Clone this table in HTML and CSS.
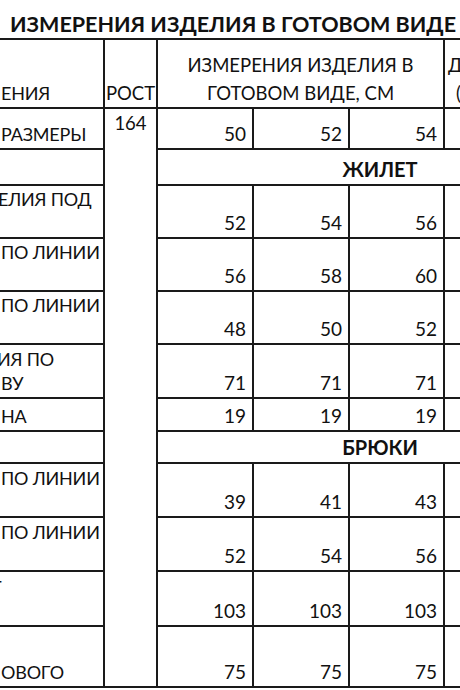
FILE: index.html
```html
<!DOCTYPE html>
<html lang="ru">
<head>
<meta charset="utf-8">
<link rel="stylesheet" href="styles.css">
</head>
<body>
<div class="sheet">
  <div class="title">ИЗМЕРЕНИЯ ИЗДЕЛИЯ В ГОТОВОМ ВИДЕ</div>
  <table class="grid">
    <colgroup>
      <col class="c-name"><col class="c-rost"><col class="c-num"><col class="c-num"><col class="c-num3"><col class="c-tol">
    </colgroup>
    <tr class="r-head">
      <td class="name">ЕНИЯ</td>
      <td class="rost-h">РОСТ</td>
      <td class="head-mid" colspan="3">ИЗМЕРЕНИЯ ИЗДЕЛИЯ В<br>ГОТОВОМ ВИДЕ, СМ</td>
      <td class="tol">ДОПУСК<br><span class="tol-2">(СМ)</span></td>
    </tr>
    <tr class="r-size">
      <td class="name">РАЗМЕРЫ</td>
      <td class="rost" rowspan="12">164</td>
      <td class="num">50</td><td class="num">52</td><td class="num">54</td><td class="num"></td>
    </tr>
    <tr class="r-sec">
      <td class="name"></td>
      <td class="section" colspan="4">ЖИЛЕТ</td>
    </tr>
    <tr class="r-53">
      <td class="name cut">ЕЛИЯ ПОД<br>&nbsp;</td>
      <td class="num">52</td><td class="num">54</td><td class="num">56</td><td class="num"></td>
    </tr>
    <tr class="r-53">
      <td class="name">ПО ЛИНИИ<br>&nbsp;</td>
      <td class="num">56</td><td class="num">58</td><td class="num">60</td><td class="num"></td>
    </tr>
    <tr class="r-53">
      <td class="name">ПО ЛИНИИ<br>&nbsp;</td>
      <td class="num">48</td><td class="num">50</td><td class="num">52</td><td class="num"></td>
    </tr>
    <tr class="r-54">
      <td class="name cut2">ИЯ ПО<br>ВУ</td>
      <td class="num">71</td><td class="num">71</td><td class="num">71</td><td class="num"></td>
    </tr>
    <tr class="r-33">
      <td class="name">НА</td>
      <td class="num">19</td><td class="num">19</td><td class="num">19</td><td class="num"></td>
    </tr>
    <tr class="r-sec2">
      <td class="name"></td>
      <td class="section" colspan="4">БРЮКИ</td>
    </tr>
    <tr class="r-54">
      <td class="name">ПО ЛИНИИ<br>&nbsp;</td>
      <td class="num">39</td><td class="num">41</td><td class="num">43</td><td class="num"></td>
    </tr>
    <tr class="r-54">
      <td class="name">ПО ЛИНИИ<br>&nbsp;</td>
      <td class="num">52</td><td class="num">54</td><td class="num">56</td><td class="num"></td>
    </tr>
    <tr class="r-55">
      <td class="name cut3">Т<br>&nbsp;</td>
      <td class="num">103</td><td class="num">103</td><td class="num">103</td><td class="num"></td>
    </tr>
    <tr class="r-61">
      <td class="name">ОВОГО</td>
      <td class="num">75</td><td class="num">75</td><td class="num">75</td><td class="num"></td>
    </tr>
  </table>
</div>
</body>
</html>
```
FILE: styles.css
```css
html, body {
  margin: 0;
  padding: 0;
  background: #ffffff;
}

body {
  font-family: Lato, "Open Sans", "DejaVu Sans", sans-serif;
  color: #111111;
}

.sheet {
  width: 460px;
  height: 690px;
  overflow: hidden;
}

.title {
  height: 38px;
  padding-left: 10px;
  font-size: 21.5px;
  font-weight: 700;
  line-height: 48px;
  white-space: nowrap;
}

.grid {
  border-collapse: collapse;
  table-layout: fixed;
  width: 603px;
  font-size: 18.5px;
}

.c-name { width: 104px; }
.c-rost { width: 53px; }
.c-num { width: 96px; }
.c-num3 { width: 95px; }
.c-tol { width: 159px; }

.grid td {
  border: 2px solid #1a1a1a;
  padding: 0 6px 2px 6px;
  vertical-align: bottom;
  line-height: 24px;
  white-space: nowrap;
  overflow: hidden;
}

.grid td.name {
  border-left: none;
  padding-left: 1px;
  padding-right: 0;
  font-size: 18px;
  letter-spacing: -0.2px;
}

.grid td.cut { text-indent: -3px; }
.grid td.cut2 { text-indent: -4px; }
.grid td.cut3 { text-indent: -10px; }

.r-head { height: 69px; }
.r-size { height: 41px; }
.r-sec { height: 36px; }
.r-53 { height: 53px; }
.r-54 { height: 54px; }
.r-55 { height: 55px; }
.r-33 { height: 33px; }
.r-sec2 { height: 32px; }
.r-61 { height: 61px; }

.grid td.rost-h {
  text-align: center;
  padding: 0 0 2px 0;
}

.grid td.head-mid {
  text-align: center;
  line-height: 28px;
  padding-bottom: 0;
}

.grid td.tol {
  padding-left: 3px;
  line-height: 28px;
  padding-bottom: 0;
}

.tol-2 {
  padding-left: 8px;
}

.grid td.rost {
  text-align: center;
  vertical-align: top;
  padding: 2px 0 0 0;
}

.grid td.num {
  text-align: right;
  padding-right: 6px;
  font-size: 19px;
}

.grid td.section {
  text-align: center;
  font-weight: 700;
  font-size: 20px;
  padding-bottom: 3px;
}
```
